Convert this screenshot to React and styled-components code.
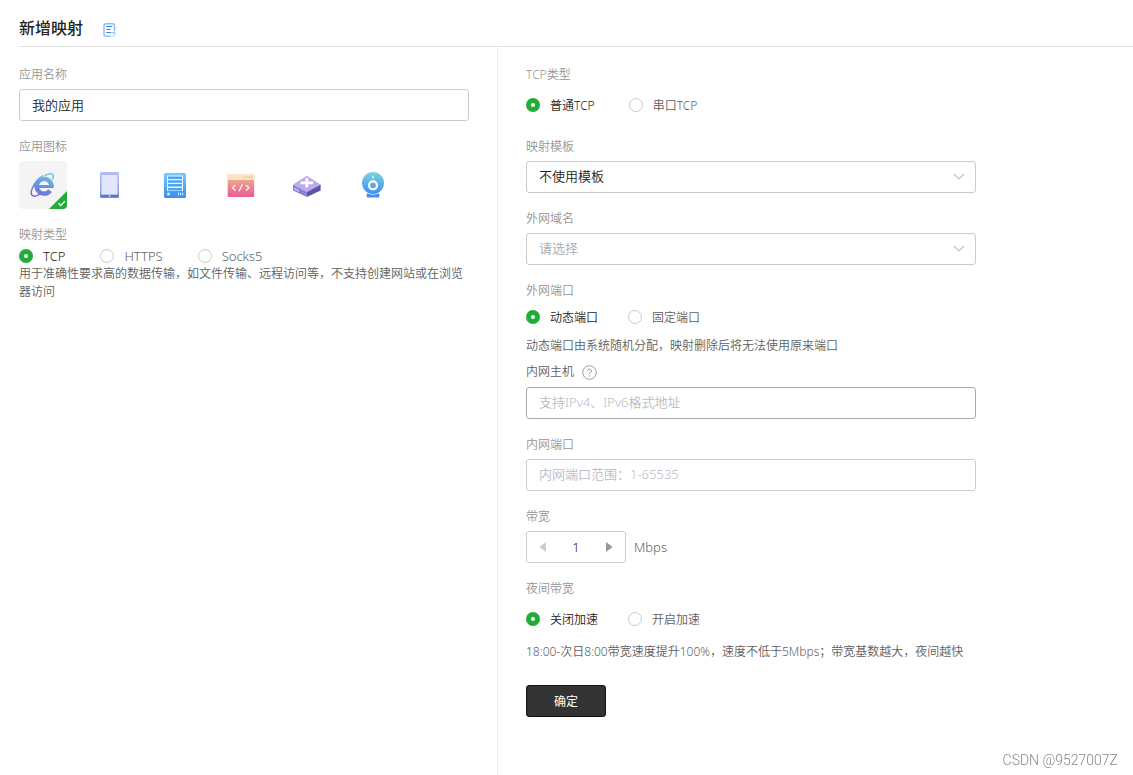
import React, {useState} from "react";
import styled, {createGlobalStyle} from "styled-components";

const App = () => {
    const [name, setName] = useState("我的应用");
    const [icon, setIcon] = useState("ie");
    const [speed, setSpeed] = useState(1);
    return (
        <Page>
            <GlobalStyle />
            <Header>
                <h1>新增映射</h1>
                <HelpLink href="#docs" aria-label="帮助文档"><DocIcon /></HelpLink>
            </Header>
            <Columns>
                <LeftPanel>
                    <Field>
                        <Label as="label" htmlFor="app-name">应用名称</Label>
                        <TextInput id="app-name" value={name} onChange={(e) => setName(e.target.value)} />
                    </Field>
                    <Field>
                        <Label>应用图标</Label>
                        <IconList>
                            {icons.map(({id, label, Icon}) => (
                                <IconTile
                                key={id}
                                type="button"
                                aria-label={label}
                                aria-pressed={icon === id}
                                $active={icon === id}
                                onClick={() => setIcon(id)}
                                >
                                    <Icon />
                                    {icon === id && <Corner />}
                                </IconTile>
                            ))}
                        </IconList>
                    </Field>
                    <Field>
                        <Label $tight>映射类型</Label>
                        <RadioGroup name="type" options={["TCP", "HTTPS", "Socks5"]} height={18} gap={35} size={13} />
                        <Description>
                            用于准确性要求高的数据传输，如文件传输、远程访问等，不支持创建网站或在浏览器访问
                        </Description>
                    </Field>
                </LeftPanel>
                <RightPanel>
                    <Field>
                        <Label>TCP类型</Label>
                        <RadioGroup name="tcp" options={["普通TCP", "串口TCP"]} height={32} gap={34} />
                    </Field>
                    <Field>
                        <Label as="label" htmlFor="template">映射模板</Label>
                        <SelectBox id="template" options={["不使用模板"]} />
                    </Field>
                    <Field>
                        <Label as="label" htmlFor="domain">外网域名</Label>
                        <SelectBox id="domain" options={["请选择"]} empty />
                    </Field>
                    <Field $tight>
                        <Label>外网端口</Label>
                        <RadioGroup name="port" options={["动态端口", "固定端口"]} height={24} gap={30} />
                        <Tip>动态端口由系统随机分配，映射删除后将无法使用原来端口</Tip>
                    </Field>
                    <Field>
                        <HostLabel>
                            <label htmlFor="host">内网主机</label>
                            <QuestionIcon />
                        </HostLabel>
                        <TextInput id="host" $strong placeholder="支持IPv4、IPv6格式地址" />
                    </Field>
                    <Field>
                        <Label as="label" htmlFor="inner-port">内网端口</Label>
                        <TextInput id="inner-port" placeholder="内网端口范围：1-65535" />
                    </Field>
                    <Field>
                        <Label as="label" htmlFor="speed">带宽</Label>
                        <SpeedRow>
                            <Stepper>
                                <StepButton type="button" aria-label="减少" disabled={speed <= 1} onClick={() => setSpeed(speed - 1)}>
                                    <svg width="8" height="10" viewBox="0 0 8 10"><path d="M7 0v10L1 5.6V4.4z" fill="currentColor" /></svg>
                                </StepButton>
                                <input id="speed" value={speed} onChange={(e) => setSpeed(Number(e.target.value) || 1)} />
                                <StepButton type="button" aria-label="增加" onClick={() => setSpeed(speed + 1)}>
                                    <svg width="8" height="10" viewBox="0 0 8 10"><path d="M1 0v10l6-4.4V4.4z" fill="currentColor" /></svg>
                                </StepButton>
                            </Stepper>
                            <span>Mbps</span>
                        </SpeedRow>
                    </Field>
                    <Field>
                        <Label>夜间带宽</Label>
                        <RadioGroup name="night" options={["关闭加速", "开启加速"]} height={32} gap={30} />
                        <Tip>18:00-次日8:00带宽速度提升100%，速度不低于5Mbps；带宽基数越大，夜间越快</Tip>
                    </Field>
                    <Submit type="button">确定</Submit>
                </RightPanel>
            </Columns>
            <Watermark>CSDN @9527007Z</Watermark>
        </Page>
    );
}

const RadioGroup = ({name, options, height, gap, size}) => (
    <Radios $height={height} $gap={gap} $size={size}>
        {options.map((option, i) => (
            <label key={option}>
                <input type="radio" name={name} defaultChecked={i === 0} />
                <span>{option}</span>
            </label>
        ))}
    </Radios>
);

const SelectBox = ({id, options, empty}) => (
    <SelectWrap>
        <Select id={id} $empty={empty}>
            {options.map((option) => <option key={option}>{option}</option>)}
        </Select>
        <svg width="12" height="7" viewBox="0 0 12 7" fill="none">
            <path d="M1 1l5 5 5-5" stroke="#c0c4cc" strokeWidth="1.1" />
        </svg>
    </SelectWrap>
);

//Icons
const DocIcon = () => (
    <svg width="14" height="14" viewBox="0 0 14 14" fill="none">
        <path d="M9 13.200H4a2 2 0 0 1-2-2V2.800a2 2 0 0 1 2-2h6.500a2 2 0 0 1 2 2V8" stroke="#8fc0f5" strokeWidth="1.500" />
        <path d="M4.300 3.500h6M4.300 6.500h4.200M4.300 9.500h5" stroke="#2f86e4" strokeWidth="1.100" />
        <path d="M10.300 10.500c0-1.700 2.700-1.500 2.700 0 0 .8-1.300.9-1.300 1.600M11.700 12.800v1" stroke="#5ca5f0" strokeWidth="1" />
    </svg>
);

const QuestionIcon = () => (
    <svg width="15" height="15" viewBox="0 0 15 15" fill="none" stroke="#909399">
        <circle cx="7.500" cy="7.500" r="6.800" strokeWidth=".9" />
        <path d="M5.500 6c0-2.600 4-2.600 4 0 0 1.400-2 1.400-2 3.100M7.500 10.300v1.200" strokeWidth="1" />
    </svg>
);

const IeIcon = () => (
    <svg viewBox="0 0 48 48" fill="none">
        <defs>
            <linearGradient id="ie" x1="28" y1="12" x2="20" y2="37" gradientUnits="userSpaceOnUse">
                <stop stopColor="#6fc6e6" />
                <stop offset=".5" stopColor="#6796dc" />
                <stop offset="1" stopColor="#7366dc" />
            </linearGradient>
        </defs>
        <path d="M31.100 29.600A7.400 7.400 0 1 1 32.500 25.500" stroke="url(#ie)" strokeWidth="4.400" />
        <path d="M19 24h15.700v3H19z" fill="url(#ie)" />
        <path d="M25.500 14.600c4.500-2.300 7.700-2.600 8.500-.9.500 1.200.2 3-.7 4.700M16 22.500c-3.300 5-4.500 9.900-2.900 11.800 1.500 1.600 5 .5 8.200-1.500" stroke="url(#ie)" strokeWidth="1.500" />
        <path d="M14.800 24.500c2-4.500 5-7.700 9.200-10" stroke="url(#ie)" strokeWidth="1.200" />
    </svg>
);

const TabletIcon = () => (
    <svg viewBox="0 0 48 48">
        <defs>
            <linearGradient id="tablet" x1="0" y1="0" x2="0" y2="1">
                <stop stopColor="#b4bcf1" />
                <stop offset="1" stopColor="#8095d8" />
            </linearGradient>
        </defs>
        <rect x="15" y="11" width="19" height="26" rx="1.500" fill="url(#tablet)" />
        <rect x="16.500" y="14" width="16" height="19.500" fill="#e2e6ff" />
        <path d="M15.500 34h18v2.300h-18z" fill="#5c78c5" />
        <circle cx="24.500" cy="35.200" r=".9" fill="#d8e0ff" />
    </svg>
);

const ServerIcon = () => (
    <svg viewBox="0 0 48 48">
        <defs>
            <linearGradient id="server" x1="0" y1="0" x2="0" y2="1">
                <stop stopColor="#7ac8fa" />
                <stop offset="1" stopColor="#3c8cf2" />
            </linearGradient>
        </defs>
        <rect x="13" y="12" width="22" height="25" rx="1.500" fill="url(#server)" />
        <path d="M16 14.500h16v15.500H16z" fill="#e9f6ff" />
        <path d="M17 15.500h14v2.500H17zM17 19.300h14v2.500H17zM17 23.100h14v2.500H17zM17 26.900h14v2.500H17z" fill="#4da4f3" />
        <circle cx="17.500" cy="33" r="1.500" fill="#d8f0ff" />
        <path d="M27 31.700h1v2.600h-1zM29 31.700h1v2.600h-1zM31 31.700h1v2.600h-1z" fill="#d8f0ff" />
    </svg>
);

const CodeIcon = () => (
    <svg viewBox="0 0 48 48" fill="none">
        <defs>
            <linearGradient id="code" x1="0" y1="0" x2="0" y2="1">
                <stop stopColor="#f3bd8c" />
                <stop offset="1" stopColor="#e65c95" />
            </linearGradient>
        </defs>
        <rect x="10.700" y="13" width="26.500" height="23" rx="1" fill="url(#code)" />
        <path d="M11.700 13h24.500a1 1 0 0 1 1 1v5H10.700v-5a1 1 0 0 1 1-1z" fill="#fde3c6" />
        <path d="M28.500 15.300h1.600v1.600h-1.600zM31.300 15.300h1.600v1.600h-1.600zM34 15.300h1.600v1.600H34z" fill="#f6be8d" />
        <path d="M18.500 24l-3 2.800 3 2.800M29 24l3 2.800-3 2.800M25.500 23.200l-3.500 7" stroke="#fff2ee" strokeWidth="1.300" />
    </svg>
);

const RouterIcon = () => (
    <svg viewBox="0 0 48 48" fill="none">
        <path d="M10 23.500v6L23.800 36v-5.500z" fill="#8782cf" />
        <path d="M37.600 23.500v6L23.800 36v-5.500z" fill="#5757a2" />
        <path d="M11 26.500l5 2.400v2l-5-2.400z" fill="#bcb8f2" />
        <path d="M23.800 14.800L37.600 23.500 23.800 31.200 10 23.500z" fill="#bda9ed" />
        <path d="M23.800 17v9.600M17.600 21.800h12.400" stroke="#fff" strokeWidth="2.800" />
    </svg>
);

const CameraIcon = () => (
    <svg viewBox="0 0 48 48" fill="none">
        <defs>
            <linearGradient id="camera" x1="0" y1="0" x2="0" y2="1">
                <stop stopColor="#7cd6da" />
                <stop offset="1" stopColor="#438bf7" />
            </linearGradient>
        </defs>
        <circle cx="24" cy="22" r="11" fill="url(#camera)" />
        <circle cx="24" cy="24.300" r="4" stroke="#fff" strokeWidth="2.200" />
        <circle cx="24" cy="16.300" r="1" fill="#fff" />
        <path d="M18.500 32.500c3.500 1.500 7.500 1.500 11 0a1 1 0 0 1 .8 1v2a1 1 0 0 1-1 1H18.700a1 1 0 0 1-1-1v-2a1 1 0 0 1 .8-1z" fill="#438cf5" />
    </svg>
);

const Corner = () => (
    <CornerMark viewBox="0 0 18 18" fill="none">
        <path d="M18 0v14a4 4 0 0 1-4 4H0z" fill="#22ac38" />
        <path d="M9.500 12.300l2.300 2.300 4-4.500" stroke="#fff" strokeWidth="1.400" />
    </CornerMark>
);

const icons = [
    {id: "ie", label: "浏览器", Icon: IeIcon},
    {id: "tablet", label: "平板", Icon: TabletIcon},
    {id: "server", label: "服务器", Icon: ServerIcon},
    {id: "code", label: "代码", Icon: CodeIcon},
    {id: "router", label: "路由器", Icon: RouterIcon},
    {id: "camera", label: "摄像头", Icon: CameraIcon},
];

//Styles
const GlobalStyle = createGlobalStyle`
    * {
        margin: 0;
        padding: 0;
        box-sizing: border-box;
    }

    body {
        background: #fff;
        color: #606060;
        font-family: "Noto Sans", "Noto Sans CJK SC", sans-serif;
        font-size: 12px;
        font-weight: 350;
    }

    input, select, button {
        font: inherit;
        color: inherit;
    }
`;

const Page = styled.div`
    min-height: 100vh;
    display: flex;
    flex-direction: column;
`;

const Header = styled.header`
    display: flex;
    align-items: center;
    gap: 19px;
    height: 47px;
    padding-top: 10px;
    margin-left: 19px;
    border-bottom: 1px solid #e2e2e2;

    h1 {
        font-size: 16px;
        line-height: 24px;
        font-weight: 500;
        color: #222;
    }
`;

const HelpLink = styled.a`
    display: flex;
    padding-top: 4px;
`;

const Columns = styled.main`
    flex: 1;
    display: grid;
    grid-template-columns: minmax(320px, 498px) 1fr;
`;

const LeftPanel = styled.section`
    padding: 17px 28px 24px 19px;
    border-right: 1px solid #ededed;
`;

const RightPanel = styled.section`
    padding: 17px 28px 24px;
`;

const Field = styled.div`
    max-width: 450px;
    margin-bottom: ${(props) => (props.$tight ? 4 : 15)}px;
`;

const Label = styled.div`
    display: block;
    line-height: 22px;
    margin-bottom: ${(props) => (props.$tight ? 1 : 3)}px;
    color: #959595;
`;

const HostLabel = styled.div`
    display: flex;
    align-items: center;
    gap: 8px;
    line-height: 24px;
    margin-bottom: 3px;
`;

const TextInput = styled.input`
    display: block;
    width: 100%;
    height: 32px;
    padding: 0 12px 2px;
    border: 1px solid ${(props) => (props.$strong ? "#aaa" : "#ccc")};
    border-radius: 3px;
    outline: none;
    font-size: 13px;
    color: #222;

    &::placeholder {
        color: #b8bcc4;
        opacity: 1;
    }
`;

const IconList = styled.div`
    display: flex;
    flex-wrap: wrap;
    gap: 18px;
`;

const IconTile = styled.button`
    position: relative;
    width: 48px;
    height: 48px;
    border: none;
    border-radius: 4px;
    background: ${(props) => (props.$active ? "#f4f4f4" : "transparent")};
    cursor: pointer;

    svg {
        display: block;
    }
`;

const CornerMark = styled.svg`
    position: absolute;
    right: 0;
    bottom: 0;
    width: 18px;
    height: 18px;
`;

const Radios = styled.div`
    display: flex;
    align-items: center;
    gap: ${(props) => props.$gap}px;
    height: ${(props) => props.$height}px;
    font-size: ${(props) => props.$size || 12}px;

    label {
        display: flex;
        align-items: center;
        gap: 10px;
        cursor: pointer;
    }

    input {
        appearance: none;
        width: 14px;
        height: 14px;
        border: 1px solid #ccc;
        border-radius: 50%;
        background: #fff;
    }

    input:checked {
        border: 5px solid #22ac38;
    }

    input:checked + span {
        color: #222;
    }
`;

const Description = styled.p`
    line-height: 18px;
`;

const Tip = styled.p`
    line-height: 20px;
    margin-top: 7px;
`;

const SelectWrap = styled.div`
    position: relative;

    svg {
        position: absolute;
        right: 11px;
        top: 12px;
        pointer-events: none;
    }
`;

const Select = styled.select`
    appearance: none;
    display: block;
    width: 100%;
    height: 32px;
    padding: 0 12px 2px;
    border: 1px solid #ccc;
    border-radius: 3px;
    background: #fff;
    font-size: 13px;
    color: ${(props) => (props.$empty ? "#a8acb4" : "#222")};
`;

const SpeedRow = styled.div`
    display: flex;
    align-items: center;
    gap: 8px;
    font-size: 13px;
`;

const Stepper = styled.div`
    display: flex;
    width: 100px;
    height: 32px;
    border: 1px solid #ccc;
    border-radius: 3px;

    input {
        flex: 1;
        min-width: 0;
        border: none;
        outline: none;
        background: none;
        text-align: center;
        color: #222;
    }
`;

const StepButton = styled.button`
    display: flex;
    align-items: center;
    justify-content: center;
    width: 32px;
    border: none;
    background: none;
    color: #999;
    cursor: pointer;

    &:disabled {
        color: #ccc;
    }
`;

const Submit = styled.button`
    display: block;
    width: 80px;
    height: 32px;
    margin-top: 23px;
    border: 1px solid #111;
    border-radius: 3px;
    background: #333;
    color: #fff;
    font-weight: 400;
    cursor: pointer;
`;

const Watermark = styled.div`
    position: fixed;
    right: 15px;
    bottom: 5px;
    font-family: Roboto, sans-serif;
    font-size: 14px;
    line-height: 20px;
    color: #888;
`;

export default App;
